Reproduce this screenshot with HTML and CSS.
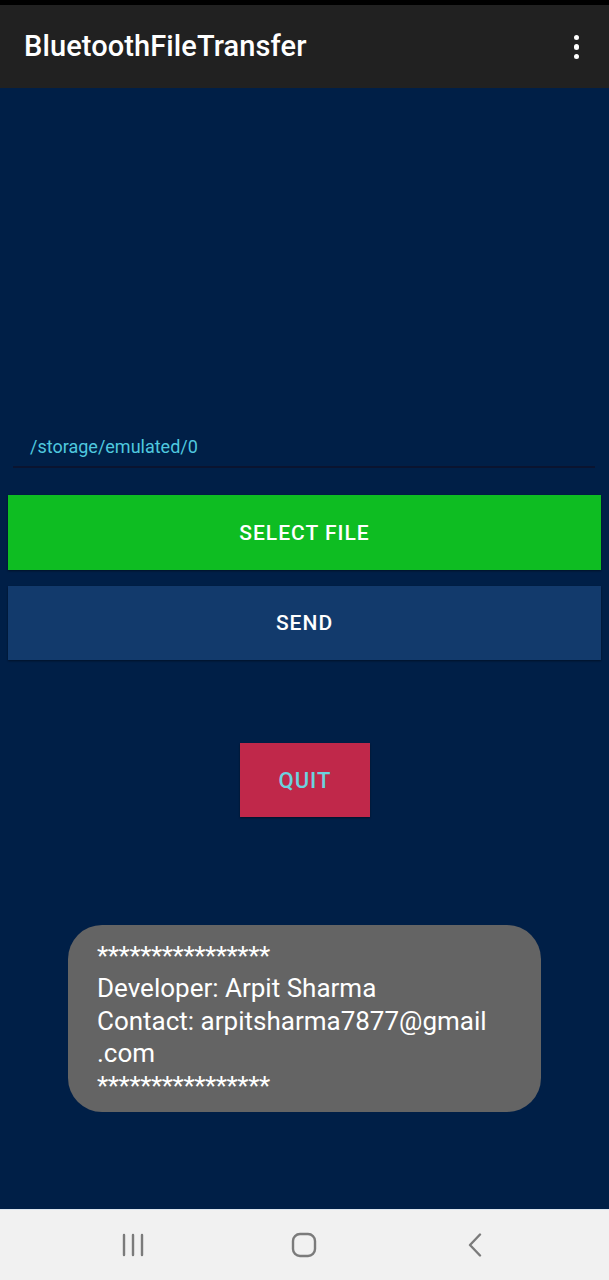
FILE: index.html
```html
<!DOCTYPE html>
<html>
<head>
<meta charset="utf-8">
<link rel="stylesheet" href="styles.css">
</head>
<body>
<div class="screen">
  <div class="status"></div>
  <header class="appbar">
    <h1 class="title">BluetoothFileTransfer</h1>
    <div class="overflow"><span></span><span></span><span></span></div>
  </header>
  <main class="main">
    <div class="field">/storage/emulated/0</div>
    <div class="btn btn-select">SELECT FILE</div>
    <div class="btn btn-send">SEND</div>
    <div class="btn btn-quit">QUIT</div>
    <div class="toast">
      <div class="stars">****************</div>
      <div class="line">Developer: Arpit Sharma</div>
      <div class="line">Contact: arpitsharma7877@gmail</div>
      <div class="line">.com</div>
      <div class="stars">****************</div>
    </div>
  </main>
  <nav class="navbar">
    <svg class="nav-icon" width="24" height="24" viewBox="0 0 24 24"><path d="M2 2v20M11 2v20M20 2v20" stroke="#7b7b7b" stroke-width="2.4" fill="none" stroke-linecap="round"/></svg>
    <svg class="nav-icon" width="26" height="26" viewBox="0 0 26 26"><rect x="2" y="2" width="22" height="22" rx="7" stroke="#7b7b7b" stroke-width="2.4" fill="none"/></svg>
    <svg class="nav-icon" width="16" height="24" viewBox="0 0 16 24"><path d="M13 1.5 L3 12 L13 22.5" stroke="#7b7b7b" stroke-width="2.4" fill="none" stroke-linecap="round" stroke-linejoin="round"/></svg>
  </nav>
</div>
</body>
</html>
```
FILE: styles.css
```css
* { box-sizing: border-box; }
html, body { margin: 0; padding: 0; }
body { font-family: Roboto, "Noto Sans", sans-serif; background: #001f47; }
.screen { width: 609px; height: 1280px; display: flex; flex-direction: column; overflow: hidden; }
.status { height: 5px; background: #000; }
.appbar { height: 83px; background: #212121; display: flex; align-items: center; justify-content: space-between; padding: 0 30px 0 24px; }
.title { margin: 0; color: #fff; font-size: 29px; font-weight: 500; letter-spacing: 0.1px; line-height: 34px; margin-top: -1px; }
.overflow { display: flex; flex-direction: column; gap: 4px; align-items: center; margin-top: 1px; }
.overflow span { width: 5.5px; height: 5.5px; border-radius: 50%; background: #fff; }
.main { flex: 1; background: #001f47; display: flex; flex-direction: column; align-items: center; }
.field { align-self: stretch; margin: 341px 14px 0 13px; height: 39px; line-height: 36px; padding-left: 17px; color: #4fc8df; font-size: 18px; border-bottom: 2px solid #0a1430; }
.btn { display: flex; align-items: center; justify-content: center; font-weight: 500; font-size: 21px; letter-spacing: 1px; color: #fff; box-shadow: 0 1px 2px rgba(0,0,0,0.45); }
.btn-select { align-self: stretch; margin: 27px 8px 0; height: 75px; background: #0ebd22; }
.btn-send { align-self: stretch; margin: 16px 8px 0; height: 74px; background: #123a6c; }
.btn-quit { margin-top: 83px; width: 130px; height: 74px; background: #c0284a; color: #6cd2df; margin-left: 1px; font-size: 22px; }
.toast { margin-top: 108px; width: 473px; height: 187px; background: #646464; border-radius: 34px; padding: 15px 20px 0 29px; color: #fff; font-size: 26px; }
.toast .line { line-height: 32.5px; }
.toast .stars { font-size: 26px; line-height: 32px; height: 32px; letter-spacing: -0.4px; }
.navbar { height: 71px; background: #f1f1f1; border-top: 1px solid #dde6ef; display: flex; align-items: center; justify-content: flex-start; padding-left: 122px; }
.nav-icon:nth-child(1) { margin-right: 145px; }
.nav-icon:nth-child(2) { margin-right: 150px; }
```
